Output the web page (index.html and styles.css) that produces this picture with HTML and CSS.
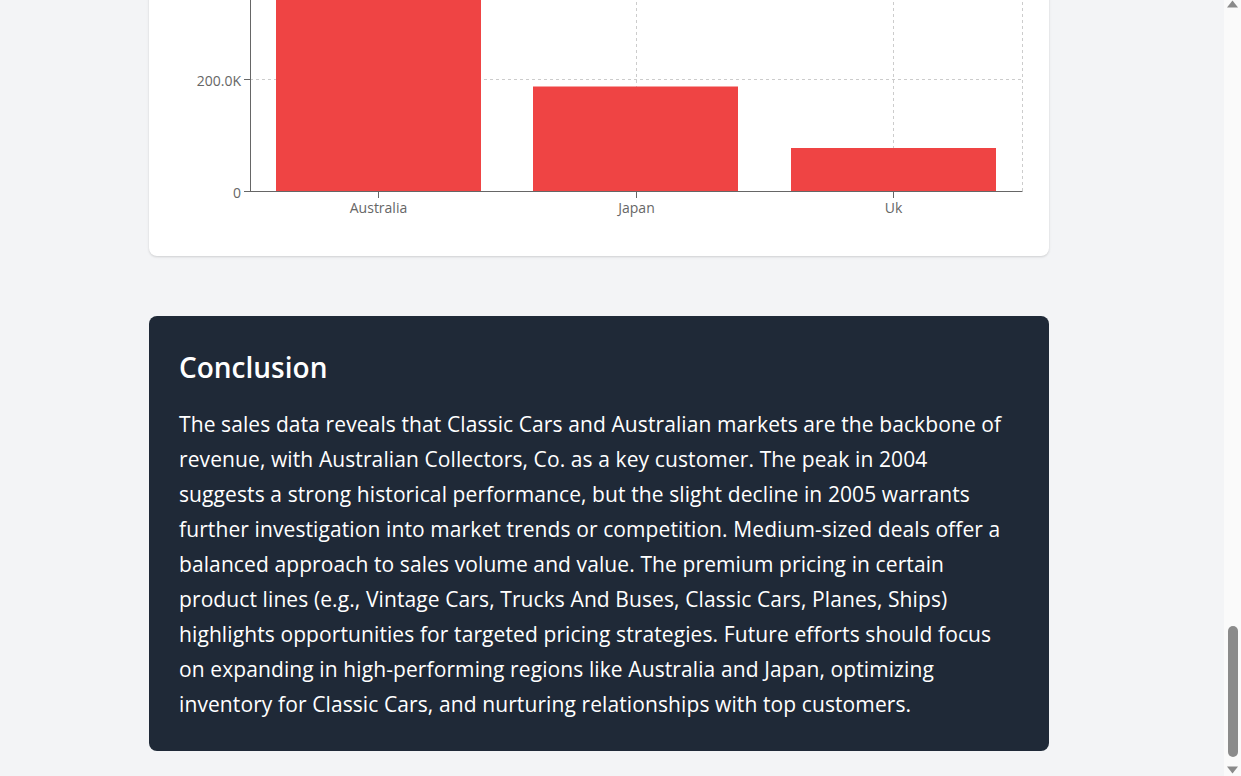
FILE: index.html
```html
<!DOCTYPE html>
<html lang="en">
<head>
<meta charset="utf-8">
<title>Sales Report</title>
<link rel="stylesheet" href="styles.css">
</head>
<body>
<div class="page">
  <main class="main">
    <section class="card chart-card">
      <svg class="chart" width="900" height="356" viewBox="149 -100 900 356" xmlns="http://www.w3.org/2000/svg">
        <g class="grid" stroke="#cccccc" stroke-dasharray="3 3" fill="none">
          <line x1="250" y1="79.5" x2="1022.5" y2="79.5"/>
          <line x1="250" y1="-33" x2="1022.5" y2="-33"/>
          <line x1="378.5" y1="-100" x2="378.5" y2="192"/>
          <line x1="636.5" y1="-100" x2="636.5" y2="192"/>
          <line x1="893.5" y1="-100" x2="893.5" y2="192"/>
          <line x1="1022.5" y1="-100" x2="1022.5" y2="192"/>
        </g>
        <g class="bars" fill="#ef4444">
          <rect x="276" y="-60" width="205" height="252"/>
          <rect x="533" y="86.5" width="205" height="105.5"/>
          <rect x="791" y="148" width="205" height="44"/>
        </g>
        <g class="axes" stroke="#666666" fill="none">
          <line x1="250.5" y1="-100" x2="250.5" y2="192"/>
          <line x1="250" y1="191.5" x2="1022.5" y2="191.5"/>
          <line x1="244" y1="79.5" x2="250" y2="79.5"/>
          <line x1="244" y1="191.5" x2="250" y2="191.5"/>
          <line x1="378.5" y1="192" x2="378.5" y2="198"/>
          <line x1="636.5" y1="192" x2="636.5" y2="198"/>
          <line x1="893.5" y1="192" x2="893.5" y2="198"/>
        </g>
        <g class="ticks" fill="#666666">
          <text x="241" y="85.5" text-anchor="end">200.0K</text>
          <text x="241" y="197.5" text-anchor="end">0</text>
          <text x="378.5" y="213" text-anchor="middle">Australia</text>
          <text x="636.5" y="213" text-anchor="middle">Japan</text>
          <text x="893.5" y="213" text-anchor="middle">Uk</text>
        </g>
      </svg>
    </section>

    <section class="card conclusion">
      <h2 class="conclusion-title">Conclusion</h2>
      <p class="conclusion-text">The sales data reveals that Classic Cars and Australian markets are the backbone of revenue, with Australian Collectors, Co. as a key customer. The peak in 2004 suggests a strong historical performance, but the slight decline in 2005 warrants further investigation into market trends or competition. Medium-sized deals offer a balanced approach to sales volume and value. The premium pricing in certain product lines (e.g., Vintage Cars, Trucks And Buses, Classic Cars, Planes, Ships) highlights opportunities for targeted pricing strategies. Future efforts should focus on expanding in high-performing regions like Australia and Japan, optimizing inventory for Classic Cars, and nurturing relationships with top customers.</p>
    </section>
  </main>

  <div class="scrollbar" aria-hidden="true">
    <svg class="sb-arrow" width="17" height="8" viewBox="0 0 17 8"><path d="M3 7.5 L8.5 0.5 L14 7.5 Z" fill="#8a8a8a"/></svg>
    <div class="sb-track"><div class="sb-thumb"></div></div>
    <svg class="sb-arrow sb-down" width="17" height="8" viewBox="0 0 17 8"><path d="M3 0.5 L8.5 7.5 L14 0.5 Z" fill="#8a8a8a"/></svg>
  </div>
</div>
</body>
</html>
```

FILE: styles.css
```css
* {
  box-sizing: border-box;
}

html,
body {
  margin: 0;
  padding: 0;
  height: 776px;
  overflow: hidden;
}

body {
  background: #f3f4f6;
  font-family: "Open Sans", "Noto Sans", "Liberation Sans", sans-serif;
}

.page {
  display: flex;
  height: 776px;
}

.main {
  flex: 1;
  display: flex;
  flex-direction: column;
  gap: 60px;
  padding-left: 149px;
}

.card {
  width: 900px;
  border-radius: 8px;
}

.chart-card {
  background: #ffffff;
  margin-top: -100px;
  box-shadow: 0 1px 3px rgba(0, 0, 0, 0.1), 0 1px 2px rgba(0, 0, 0, 0.06);
  overflow: hidden;
}

.chart {
  display: block;
}

.ticks {
  font-family: "Open Sans", "Noto Sans", sans-serif;
  font-size: 14px;
}

.conclusion {
  background: #1f2937;
  padding: 33px 30px 29px;
  color: #ffffff;
}

.conclusion-title {
  margin: 0 0 22px;
  font-size: 28px;
  line-height: 36px;
  font-weight: 600;
  color: #ffffff;
}

.conclusion-text {
  margin: 0;
  width: 828px;
  font-size: 21px;
  line-height: 35px;
  letter-spacing: 0.1px;
}

.scrollbar {
  width: 17px;
  height: 776px;
  background: #fafafa;
  display: flex;
  flex-direction: column;
  align-items: center;
}

.sb-arrow {
  display: block;
  flex: none;
}

.sb-track {
  flex: 1;
  width: 100%;
  display: flex;
  flex-direction: column;
  justify-content: flex-end;
  align-items: center;
  padding-bottom: 9px;
}

.sb-thumb {
  width: 10px;
  height: 131px;
  border-radius: 5px;
  background: #8b8b8b;
}

.sb-down {
  margin-bottom: 2px;
}
```
